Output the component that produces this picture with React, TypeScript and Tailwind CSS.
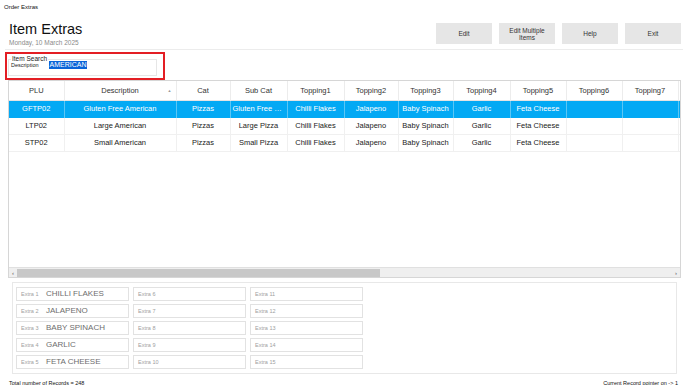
import React from 'react';

const columns = [
  { name: 'PLU', w: 'w-[55px]' },
  { name: 'Description', w: 'w-[112px]', sort: true },
  { name: 'Cat', w: 'w-[54px]' },
  { name: 'Sub Cat', w: 'w-[57px]' },
  { name: 'Topping1', w: 'w-[57px]' },
  { name: 'Topping2', w: 'w-[54px]' },
  { name: 'Topping3', w: 'w-[55px]' },
  { name: 'Topping4', w: 'w-[57px]' },
  { name: 'Topping5', w: 'w-[56px]' },
  { name: 'Topping6', w: 'w-[56px]' },
  { name: 'Topping7', w: 'w-[56px]' },
];

const rows = [
  ['GFTP02', 'Gluten Free American', 'Pizzas', 'Gluten Free Pizza', 'Chilli Flakes', 'Jalapeno', 'Baby Spinach', 'Garlic', 'Feta Cheese', '', ''],
  ['LTP02', 'Large American', 'Pizzas', 'Large Pizza', 'Chilli Flakes', 'Jalapeno', 'Baby Spinach', 'Garlic', 'Feta Cheese', '', ''],
  ['STP02', 'Small American', 'Pizzas', 'Small Pizza', 'Chilli Flakes', 'Jalapeno', 'Baby Spinach', 'Garlic', 'Feta Cheese', '', ''],
];

const extras = ['CHILLI FLAKES', 'JALAPENO', 'BABY SPINACH', 'GARLIC', 'FETA CHEESE'];

function ExtraBox({ n, value }: { n: number; value?: string }) {
  return (
    <div className="w-[113px] h-[14px] border border-[#e2e2e2] bg-white flex items-center pl-[4px]">
      <span className="text-[5.5px] text-[#a0a0a0] w-[25px] shrink-0">Extra {n}</span>
      {value && <span className="text-[8px] text-[#6e6e6e] leading-none">{value}</span>}
    </div>
  );
}

export default function App() {
  return (
    <div className="w-[688px] h-[385px] bg-white overflow-hidden text-[#222]" style={{ fontFamily: '"Liberation Sans", Arial, sans-serif' }}>
      {/* window title */}
      <div className="h-[14px] pl-[4px] text-[6px] leading-[14px] text-[#111]">Order Extras</div>

      {/* header */}
      <div className="h-[36px] mx-[5px] flex justify-between border-b border-[#ececec]">
        <div className="pl-[4px] pt-[6px]">
          <div className="text-[14.5px] leading-[18px] text-[#111]">Item Extras</div>
          <div className="text-[6.5px] leading-[10px] text-[#8a8a8a]">Monday, 10 March 2025</div>
        </div>
        <div className="flex gap-[7px] pt-[9px] pr-[2px]">
          {['Edit', 'Edit Multiple Items', 'Help', 'Exit'].map((b) => (
            <button key={b} className="w-[56px] h-[21px] bg-[#e6e6e6] text-[6.5px] leading-[7px] text-[#333] flex items-center justify-center text-center px-[8px]">
              {b}
            </button>
          ))}
        </div>
      </div>

      {/* search */}
      <div className="ml-[5px] mt-[2px] w-[160px] h-[28px] border-2 border-[#e31e24] pl-[1px] pt-[2px]">
        <fieldset className="w-[149px] h-[20px] border border-[#e6e6e6] px-[2px] relative">
          <legend className="text-[6.5px] leading-[6px] text-[#222] px-[1px]">Item Search</legend>
          <div className="flex items-center -mt-[1px]">
            <span className="text-[5.5px] text-[#222] w-[38px]">Description</span>
            <span className="bg-[#0a64d8] text-white text-[7px] leading-[8px] px-[0.5px]">AMERICAN</span>
          </div>
        </fieldset>
      </div>

      {/* grid */}
      <div className="ml-[8px] w-[673px] h-[198px] border border-[#d6d6d6] flex flex-col">
        <div className="flex-1 overflow-hidden">
          <table className="table-fixed w-[673px] border-collapse text-[7.5px]">
            <thead>
              <tr className="h-[19px] border-b border-[#e4e4e4]">
                {columns.map((c) => (
                  <th key={c.name} className={`${c.w} font-normal text-[#333] border-r border-[#ececec] relative`}>
                    {c.name}
                    {c.sort && <span className="absolute right-[4px] top-[7px] text-[4px] text-[#999]">▲</span>}
                  </th>
                ))}
                <th className="w-[4px]" />
              </tr>
            </thead>
            <tbody>
              {rows.map((r, i) => (
                <tr key={r[0]} className={`h-[17px] border-b ${i === 0 ? 'bg-[#03a9f4] text-white border-[#03a9f4]' : 'border-[#f0f0f0] text-[#222]'}`}>
                  {r.map((cell, j) => (
                    <td key={j} className={`text-center px-[2px] whitespace-nowrap overflow-hidden text-ellipsis border-r ${i === 0 ? 'border-[#5cc6f5]' : 'border-[#f0f0f0]'}`}>
                      {cell}
                    </td>
                  ))}
                  <td />
                </tr>
              ))}
            </tbody>
          </table>
        </div>
        <div className="h-[10px] bg-[#efefef] border-t border-[#e0e0e0] flex items-center">
          <span className="w-[8px] text-[6px] text-[#555] text-center leading-none">‹</span>
          <div className="w-[363px] h-[8px] bg-[#c8c8c8]" />
          <div className="flex-1" />
          <span className="w-[8px] text-[6px] text-[#555] text-center leading-none">›</span>
        </div>
      </div>

      {/* extras */}
      <div className="ml-[12px] mt-[4px] w-[665px] h-[92px] border border-[#e8e8e8] pl-[3px] pt-[4px] flex gap-[4px]">
        {[0, 1, 2].map((col) => (
          <div key={col} className="flex flex-col gap-[3px]">
            {[0, 1, 2, 3, 4].map((row) => {
              const n = col * 5 + row + 1;
              return <ExtraBox key={n} n={n} value={col === 0 ? extras[row] : undefined} />;
            })}
          </div>
        ))}
      </div>

      {/* footer */}
      <div className="flex justify-between pl-[9px] pr-[10px] mt-[5px] text-[5.5px] text-[#111]">
        <span>Total number of Records = 248</span>
        <span>Current Record pointer on -&gt; 1</span>
      </div>
    </div>
  );
}
